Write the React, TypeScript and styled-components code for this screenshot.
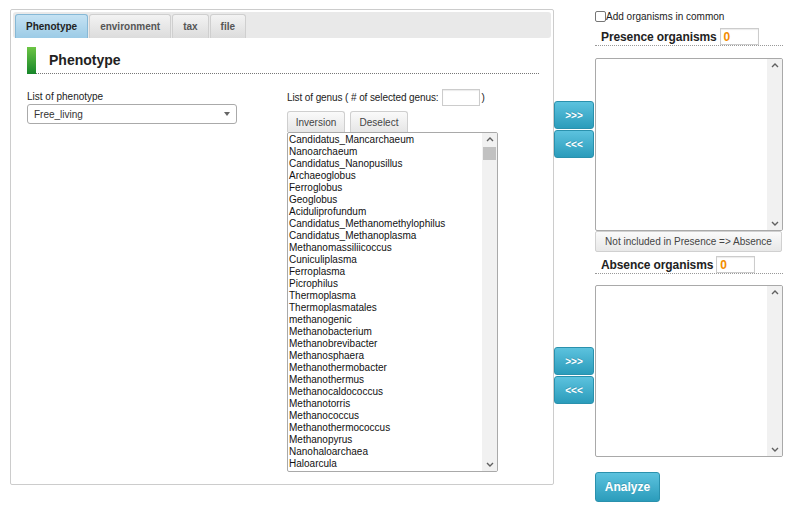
import React from 'react';
import styled, { createGlobalStyle } from 'styled-components';

const GlobalStyle = createGlobalStyle`
  body {
    margin: 0;
    background: #fff;
    font-family: "Liberation Sans", Arial, sans-serif;
    font-size: 10px;
    color: #222;
  }
`;

const genusList = [
  'Candidatus_Mancarchaeum', 'Nanoarchaeum', 'Candidatus_Nanopusillus', 'Archaeoglobus',
  'Ferroglobus', 'Geoglobus', 'Aciduliprofundum', 'Candidatus_Methanomethylophilus',
  'Candidatus_Methanoplasma', 'Methanomassiliicoccus', 'Cuniculiplasma', 'Ferroplasma',
  'Picrophilus', 'Thermoplasma', 'Thermoplasmatales', 'methanogenic', 'Methanobacterium',
  'Methanobrevibacter', 'Methanosphaera', 'Methanothermobacter', 'Methanothermus',
  'Methanocaldococcus', 'Methanotorris', 'Methanococcus', 'Methanothermococcus',
  'Methanopyrus', 'Nanohaloarchaea', 'Haloarcula',
];

const Page = styled.div`
  display: flex;
  align-items: flex-start;
  padding: 9px 0 0 10px;
`;

const LeftPanel = styled.div`
  box-sizing: border-box;
  width: 544px;
  height: 476px;
  border: 1px solid #ccc;
  border-radius: 2px;
  padding: 2px;
`;

const TabBar = styled.div`
  display: flex;
  gap: 1px;
  height: 26px;
  box-sizing: border-box;
  padding: 2px 2px 0;
  background: #e9e9e9;
  border-radius: 3px;
`;

const Tab = styled.div<{ $active?: boolean }>`
  box-sizing: border-box;
  height: 24px;
  padding: 0 10px;
  display: flex;
  align-items: center;
  font-weight: bold;
  font-size: 10px;
  color: ${(p) => (p.$active ? '#222' : '#555')};
  border: 1px solid ${(p) => (p.$active ? '#86b8d6' : '#cfcfcf')};
  border-bottom: none;
  border-radius: 3px 3px 0 0;
  background: ${(p) =>
    p.$active
      ? 'linear-gradient(#c5e2f3, #9ccbe6)'
      : 'linear-gradient(#f3f3f3, #dcdcdc)'};
`;

const Content = styled.div`
  padding: 9px 12px 0 14px;
`;

const Heading = styled.div`
  display: flex;
  align-items: stretch;
  height: 27px;
`;

const GreenBar = styled.div`
  width: 9px;
  height: 27px;
  background: linear-gradient(#6cc544, #17862a);
`;

const HeadingText = styled.div`
  flex: 1;
  display: flex;
  align-items: center;
  padding-left: 13px;
  font-size: 14px;
  font-weight: bold;
  color: #222;
  border-bottom: 1px dotted #777;
`;

const FormRow = styled.div`
  display: flex;
  margin-top: 15px;
`;

const PhenoCol = styled.div`
  width: 260px;
  padding-top: 2px;
`;

const Label = styled.div`
  font-size: 10px;
  line-height: 12px;
  color: #222;
`;

const Select = styled.div`
  box-sizing: border-box;
  margin-top: 1px;
  width: 210px;
  height: 20px;
  border: 1px solid #aaa;
  border-radius: 3px;
  display: flex;
  align-items: center;
  justify-content: space-between;
  padding: 0 6px 0 6px;
  font-size: 10px;
  color: #333;
`;

const Caret = styled.span`
  width: 0;
  height: 0;
  border-left: 3px solid transparent;
  border-right: 3px solid transparent;
  border-top: 4px solid #666;
`;

const GenusCol = styled.div`
  display: flex;
  flex-direction: column;
`;

const GenusLabel = styled.div`
  display: flex;
  align-items: center;
  font-size: 10px;
  letter-spacing: -0.1px;
  color: #222;
  height: 17px;
`;

const CountInput = styled.span<{ $w: number }>`
  box-sizing: border-box;
  display: inline-flex;
  align-items: center;
  width: ${(p) => p.$w}px;
  height: 17px;
  border: 1px solid #ccc;
  box-shadow: inset 0 1px 1px rgba(0, 0, 0, 0.08);
  margin: 0 2px 0 3px;
  padding-left: 3px;
  font-size: 12px;
  letter-spacing: 0;
  color: #f28c00;
`;

const SmallButtons = styled.div`
  display: flex;
  gap: 5px;
  margin-top: 5px;
`;

const GrayButton = styled.div`
  box-sizing: border-box;
  width: 58px;
  height: 21px;
  display: flex;
  align-items: center;
  justify-content: center;
  font-size: 10px;
  color: #444;
  border: 1px solid #cfcfcf;
  border-bottom: none;
  border-radius: 3px 3px 0 0;
  background: linear-gradient(#fafafa, #e6e6e6);
`;

const ListBox = styled.div<{ $w: number; $h: number }>`
  box-sizing: border-box;
  display: flex;
  width: ${(p) => p.$w}px;
  height: ${(p) => p.$h}px;
  border: 1px solid #a9a9a9;
  border-radius: 2px;
  background: #fff;
  overflow: hidden;
`;

const ListContent = styled.div`
  flex: 1;
  min-width: 0;
  padding-top: 1px;
`;

const ListItem = styled.div`
  font-size: 10px;
  line-height: 12px;
  padding-left: 1px;
  color: #111;
  white-space: nowrap;
`;

const ScrollBar = styled.div`
  width: 15px;
  display: flex;
  flex-direction: column;
  background: #f1f1f1;
`;

const ScrollArrow = styled.div`
  height: 13px;
  display: flex;
  align-items: center;
  justify-content: center;
`;

const ScrollTrack = styled.div`
  flex: 1;
  padding: 0 1px;
`;

const Thumb = styled.div<{ $top: number; $h: number }>`
  margin-top: ${(p) => p.$top}px;
  height: ${(p) => p.$h}px;
  background: #c1c1c1;
`;

const MiddleCol = styled.div`
  width: 40px;
  margin-right: 1px;
  padding-top: 92px;
  display: flex;
  flex-direction: column;
`;

const ArrowGroup = styled.div<{ $top: number }>`
  display: flex;
  flex-direction: column;
  gap: 1px;
  margin-top: ${(p) => p.$top}px;
`;

const BlueButton = styled.div<{ $w?: number; $h?: number; $size?: number }>`
  box-sizing: border-box;
  width: ${(p) => p.$w ?? 40}px;
  height: ${(p) => p.$h ?? 28}px;
  display: flex;
  align-items: center;
  justify-content: center;
  color: #fff;
  font-weight: bold;
  font-size: ${(p) => p.$size ?? 10}px;
  border: 1px solid #2a91ad;
  border-radius: 3px;
  background: linear-gradient(#5cc2de, #2b9cbb);
  text-shadow: 0 -1px 0 rgba(0, 0, 0, 0.15);
`;

const RightCol = styled.div`
  width: 188px;
  padding-top: 1px;
  display: flex;
  flex-direction: column;
`;

const CheckRow = styled.label`
  display: flex;
  align-items: center;
  height: 12px;
  font-size: 10px;
  color: #222;
`;

const CheckBox = styled.span`
  box-sizing: border-box;
  width: 11px;
  height: 11px;
  border: 1px solid #767676;
  border-radius: 2px;
  background: #fff;
`;

const OrgTitle = styled.div<{ $top: number }>`
  display: flex;
  align-items: center;
  margin-top: ${(p) => p.$top}px;
  padding-left: 6px;
  height: 17px;
  font-size: 12px;
  font-weight: bold;
  letter-spacing: -0.1px;
  color: #222;
  border-bottom: 1px dotted #999;
`;

const Spacer = styled.div<{ $h: number }>`
  height: ${(p) => p.$h}px;
`;

const NotIncludedButton = styled.div`
  box-sizing: border-box;
  width: 187px;
  height: 21px;
  display: flex;
  align-items: center;
  justify-content: center;
  font-size: 10px;
  color: #444;
  border: 1px solid #d0d0d0;
  border-radius: 2px;
  background: linear-gradient(#fafafa, #e8e8e8);
`;

const Chevron = ({ down }: { down?: boolean }) => (
  <svg width="8" height="5" viewBox="0 0 8 5">
    <path
      d={down ? 'M1 1 L4 4 L7 1' : 'M1 4 L4 1 L7 4'}
      fill="none"
      stroke="#606060"
      strokeWidth="1.4"
    />
  </svg>
);

const FakeScroll = ({ thumb }: { thumb?: { top: number; h: number } }) => (
  <ScrollBar>
    <ScrollArrow>
      <Chevron />
    </ScrollArrow>
    <ScrollTrack>{thumb && <Thumb $top={thumb.top} $h={thumb.h} />}</ScrollTrack>
    <ScrollArrow>
      <Chevron down />
    </ScrollArrow>
  </ScrollBar>
);

export default function App() {
  return (
    <>
      <GlobalStyle />
      <Page>
        <LeftPanel>
          <TabBar>
            <Tab $active>Phenotype</Tab>
            <Tab>environment</Tab>
            <Tab>tax</Tab>
            <Tab>file</Tab>
          </TabBar>
          <Content>
            <Heading>
              <GreenBar />
              <HeadingText>Phenotype</HeadingText>
            </Heading>
            <FormRow>
              <PhenoCol>
                <Label>List of phenotype</Label>
                <Select>
                  <span>Free_living</span>
                  <Caret />
                </Select>
              </PhenoCol>
              <GenusCol>
                <GenusLabel>
                  List of genus ( # of selected genus:
                  <CountInput $w={38} />)
                </GenusLabel>
                <SmallButtons>
                  <GrayButton>Inversion</GrayButton>
                  <GrayButton>Deselect</GrayButton>
                </SmallButtons>
                <ListBox $w={211} $h={340}>
                  <ListContent>
                    {genusList.map((g) => (
                      <ListItem key={g}>{g}</ListItem>
                    ))}
                  </ListContent>
                  <FakeScroll thumb={{ top: 1, h: 13 }} />
                </ListBox>
              </GenusCol>
            </FormRow>
          </Content>
        </LeftPanel>
        <MiddleCol>
          <ArrowGroup $top={0}>
            <BlueButton>&gt;&gt;&gt;</BlueButton>
            <BlueButton>&lt;&lt;&lt;</BlueButton>
          </ArrowGroup>
          <ArrowGroup $top={189}>
            <BlueButton>&gt;&gt;&gt;</BlueButton>
            <BlueButton>&lt;&lt;&lt;</BlueButton>
          </ArrowGroup>
        </MiddleCol>
        <RightCol>
          <CheckRow>
            <CheckBox />
            Add organisms in common
          </CheckRow>
          <OrgTitle $top={6}>
            Presence organisms
            <CountInput $w={39}>0</CountInput>
          </OrgTitle>
          <Spacer $h={12} />
          <ListBox $w={188} $h={173}>
            <ListContent />
            <FakeScroll />
          </ListBox>
          <NotIncludedButton>Not included in Presence =&gt; Absence</NotIncludedButton>
          <OrgTitle $top={4}>
            Absence organisms
            <CountInput $w={39}>0</CountInput>
          </OrgTitle>
          <Spacer $h={11} />
          <ListBox $w={188} $h={172}>
            <ListContent />
            <FakeScroll />
          </ListBox>
          <Spacer $h={15} />
          <BlueButton $w={65} $h={30} $size={12}>
            Analyze
          </BlueButton>
        </RightCol>
      </Page>
    </>
  );
}
